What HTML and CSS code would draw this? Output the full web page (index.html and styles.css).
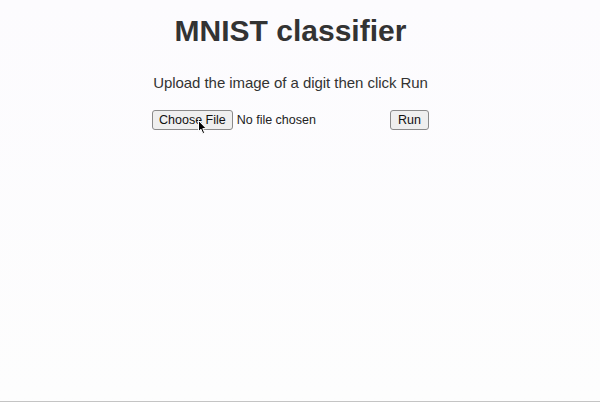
FILE: index.html
```html
<!DOCTYPE html>
<html>
<head>
<meta charset="utf-8">
<link rel="stylesheet" href="styles.css">
</head>
<body>
<main class="app">
  <h1 class="title">MNIST classifier</h1>
  <p class="subtitle">Upload the image of a digit then click Run</p>
  <div class="controls">
    <div class="file">
      <button class="btn choose" type="button">Choose File</button>
      <span class="file-label">No file chosen</span>
      <svg class="cursor" width="10" height="15" viewBox="0 0 10 15">
        <path d="M0.5 0.5 L0.5 11.5 L3 9.2 L4.8 13.6 L6.6 12.8 L4.8 8.6 L8.3 8.6 Z" fill="#000" stroke="#fff" stroke-width="1"/>
      </svg>
    </div>
    <button class="btn run" type="button">Run</button>
  </div>
</main>
</body>
</html>
```
FILE: styles.css
```css
html, body {
  margin: 0;
  padding: 0;
}
body {
  width: 600px;
  height: 402px;
  box-sizing: border-box;
  background: linear-gradient(#fcfbfe, #fdfdfd);
  border-bottom: 1px solid #c4c4c4;
  font-family: "Liberation Sans", Arial, sans-serif;
  color: #333;
  overflow: hidden;
}
.app {
  width: 277px;
  margin-left: 152px;
  display: flex;
  flex-direction: column;
  align-items: center;
}
.title {
  margin: 13px 0 0;
  font-size: 30px;
  line-height: 36px;
  font-weight: bold;
  color: #333;
  white-space: nowrap;
}
.subtitle {
  margin: 24px 0 0;
  font-size: 15px;
  line-height: 20px;
  color: #333;
  white-space: nowrap;
  letter-spacing: -0.05px;
}
.controls {
  align-self: stretch;
  margin-top: 17px;
  display: flex;
  justify-content: space-between;
  align-items: center;
}
.file {
  position: relative;
  display: flex;
  align-items: center;
  gap: 4px;
}
.btn {
  font-family: "Liberation Sans", Arial, sans-serif;
  font-size: 12.5px;
  line-height: 15px;
  color: #111;
  background: #efefef;
  border: 1px solid #8a8a8a;
  border-radius: 3px;
  padding: 1px 6px;
  height: 20px;
  margin: 0;
}
.run {
  padding: 1px 7px;
}
.file-label {
  font-size: 12.5px;
  color: #222;
}
.cursor {
  position: absolute;
  left: 46px;
  top: 10px;
}
```
